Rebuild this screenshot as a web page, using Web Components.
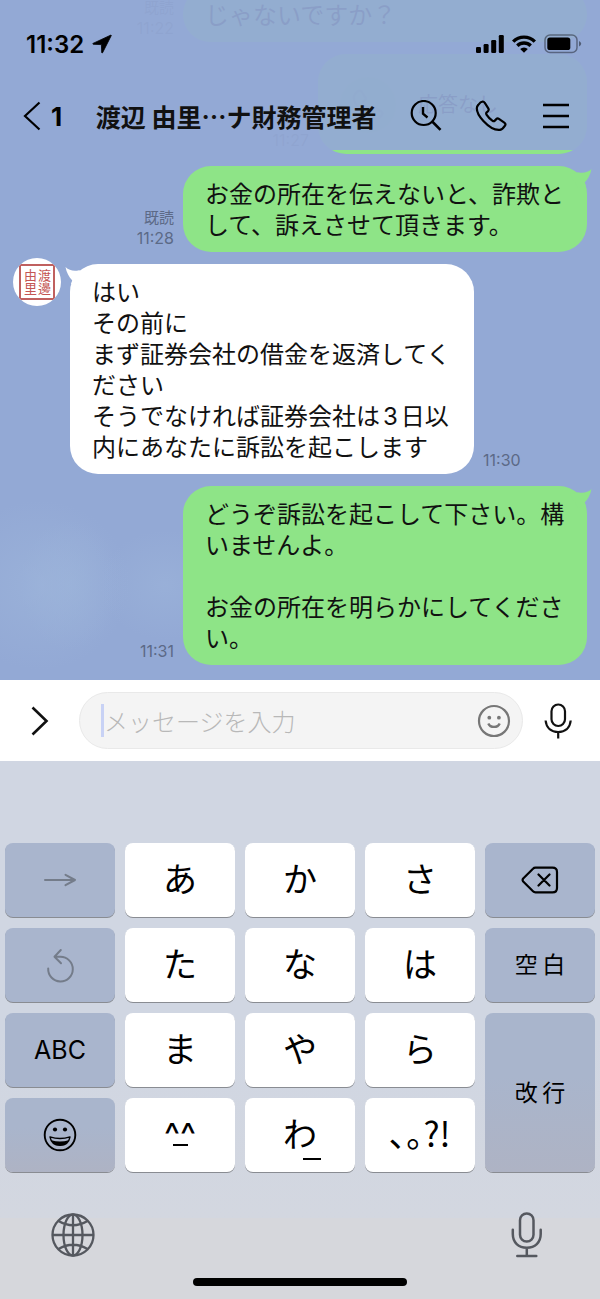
<!DOCTYPE html>
<html lang="ja">
<head>
<meta charset="utf-8">
<meta name="viewport" content="width=device-width, initial-scale=1">
<title>トーク</title>
<style>
    body {
        margin: 0;
        height: 100vh;
        display: flex;
        flex-direction: column;
        font-family: Inter, "Noto Sans CJK JP", sans-serif;
        color: #111;
        background: #93a9d5;
    }
</style>
</head>
<body>
    <chat-header unread="1">渡辺 由里…ナ財務管理者</chat-header>

    <chat-room>
        <chat-message side="out" time="11:22" read wide>じゃないですか？</chat-message>
        <chat-message side="out" time="11:27" call>応答なし</chat-message>
        <chat-message side="out" time="11:28" read tail>お金の所在を伝えないと、詐欺として、訴えさせて頂きます。</chat-message>
        <chat-message side="in" time="11:30" tail>はい<br>その前に<br>まず証券会社の借金を返済してください<br>そうでなければ証券会社は3日以内にあなたに訴訟を起こします<user-seal slot="avatar">渡邊由里</user-seal></chat-message>
        <chat-message side="out" time="11:31" tail>どうぞ訴訟を起こして下さい。構いませんよ。<br><br>お金の所在を明らかにしてください。</chat-message>
    </chat-room>

    <message-composer placeholder="メッセージを入力"></message-composer>

    <kana-keyboard>
        <kana-key tone="dim" label="次へ"><app-icon name="arrow"></app-icon></kana-key>
        <kana-key>あ</kana-key>
        <kana-key>か</kana-key>
        <kana-key>さ</kana-key>
        <kana-key tone="dark" label="削除"><app-icon name="delete"></app-icon></kana-key>

        <kana-key tone="dim" label="戻す"><app-icon name="undo"></app-icon></kana-key>
        <kana-key>た</kana-key>
        <kana-key>な</kana-key>
        <kana-key>は</kana-key>
        <kana-key tone="dark">空&thinsp;白</kana-key>

        <kana-key tone="dark" latin>ABC</kana-key>
        <kana-key>ま</kana-key>
        <kana-key>や</kana-key>
        <kana-key>ら</kana-key>
        <kana-key tone="dark" tall>改&thinsp;行</kana-key>

        <kana-key tone="dark" shade label="絵文字"><app-icon name="grin"></app-icon></kana-key>
        <kana-key mark="face">^^</kana-key>
        <kana-key mark="wa">わ</kana-key>
        <kana-key>､｡?!</kana-key>
    </kana-keyboard>

<script>
// every icon is [width, height, svg content], drawn with currentColor
const ICONS = {
    location: [20, 20, '<path d="M19 1 L1 9.400 Q.4 10 1.200 10.300 L9.400 10.600 L9.700 18.600 Q10 19.500 10.600 18.700 L19.300 1.500 Z" fill="currentColor" stroke="currentColor" stroke-width=".8" stroke-linejoin="round"/>'],
    signal: [28, 18, '<g fill="currentColor"><rect x="0" y="12" width="5" height="6" rx="1.300"/><rect x="7.600" y="9" width="5" height="9" rx="1.300"/><rect x="15.200" y="5" width="5" height="13" rx="1.300"/><rect x="22.800" y="0" width="5" height="18" rx="1.300"/></g>'],
    wifi: [24, 18, '<g fill="none" stroke="currentColor" stroke-width="3.400"><path d="M1.200 6.600 A15.300 15.300 0 0 1 22.800 6.600"/><path d="M5.300 10.700 A9.500 9.500 0 0 1 18.700 10.700"/></g><path d="M8.200 14 A5.400 5.400 0 0 1 15.800 14 L12 17.800 Z" fill="currentColor"/>'],
    battery: [38, 20, '<rect x="1" y="1" width="32" height="17.500" rx="5" fill="none" stroke="currentColor" stroke-opacity=".4" stroke-width="1.500"/><rect x="3.300" y="3.500" width="23" height="12.500" rx="2.600" fill="currentColor"/><path d="M35 7 Q37.200 8 37.200 9.800 T35 12.600 Z" fill="currentColor" opacity=".45"/>'],
    back: [18, 30, '<path d="M16.500 1.500 L2 15 L16.500 28.500" fill="none" stroke="currentColor" stroke-width="2.200"/>'],
    search: [32, 32, '<g fill="none" stroke="currentColor" stroke-width="2.200"><circle cx="13.700" cy="13" r="12"/><path d="M22.200 21.500 L30.500 29.800" stroke-width="2.600"/><path d="M13 7 V13.800 L17.500 17.500" stroke-width="2.400"/></g>'],
    phone: [32, 32, '<path d="M3.300 4.800 C4.500 3.200 6.300 1.700 7.700 1.500 C8.700 1.400 9.200 2 9.800 2.900 L13.300 8.300 C14 9.400 13.900 10 13.100 10.900 L11.600 12.500 C11 13.200 11 13.800 11.500 14.600 C13 17 15.200 19.200 17.600 20.800 C18.500 21.400 19.100 21.300 19.800 20.600 L21.300 19.100 C22.100 18.300 22.900 18.200 23.900 18.900 L29.300 22.600 C30.600 23.500 30.800 24.400 30 25.600 C28.800 27.500 27.300 29.400 25 29.800 C19.500 30.500 12.500 25.300 8.400 20.900 C4.600 16.900 1.800 11.700 1.800 8.200 C1.800 6.900 2.400 5.900 3.300 4.800 Z" fill="none" stroke="currentColor" stroke-width="2.200" stroke-linejoin="round"/>'],
    menu: [32, 32, '<path d="M3 5 H29 M3 16 H29 M3 27 H29" stroke="currentColor" stroke-width="2.400"/>'],
    expand: [18, 30, '<path d="M1.500 1.500 L15.500 15 L1.500 28.500" fill="none" stroke="currentColor" stroke-width="2.600"/>'],
    smile: [34, 34, '<circle cx="17" cy="17" r="15" fill="none" stroke="currentColor" stroke-width="2.200"/><circle cx="12.300" cy="13.700" r="1.900" fill="currentColor"/><circle cx="21.900" cy="13.700" r="1.900" fill="currentColor"/><path d="M11.300 19.400 C13.300 24 20.700 24 22.700 19.400" fill="none" stroke="currentColor" stroke-width="2.400"/>'],
    mic: [28, 36, '<g fill="none" stroke="currentColor" stroke-width="2.200"><rect x="7.500" y="1.500" width="13.500" height="21.500" rx="6.700"/><path d="M1.600 17.500 C2.300 25.200 7.500 29 14.200 29 C21 29 26 25.200 26.700 17.500 M14.200 29 V35.500"/></g>'],
    arrow: [34, 16, '<path d="M2 8 H32 M22.500 2.800 L32 8 L22.500 13.200" fill="none" stroke="currentColor" stroke-width="2" stroke-linecap="round" stroke-linejoin="round"/>'],
    undo: [34, 36, '<path d="M5.200 21.500 A12.300 12.300 0 1 0 17.300 9.800 L11.800 9.800 M17.800 3 L11.500 9.700 L18 16.300" fill="none" stroke="currentColor" stroke-width="2" stroke-linecap="round" stroke-linejoin="round"/>'],
    delete: [38, 28, '<path d="M14.500 1.600 H31.500 Q36 1.600 36 6 V22 Q36 26.400 31.500 26.400 H14.500 Q13 26.400 12 25.300 L2.200 15.500 Q1 14 2.200 12.500 L12 2.700 Q13 1.600 14.500 1.600 Z M17.500 8.500 L28.500 19.500 M28.500 8.500 L17.500 19.500" fill="none" stroke="currentColor" stroke-width="2.200" stroke-linecap="round" stroke-linejoin="round"/>'],
    grin: [34, 34, '<circle cx="17" cy="17" r="15.300" fill="none" stroke="currentColor" stroke-width="1.900"/><circle cx="12" cy="11.500" r="2.100" fill="currentColor"/><circle cx="22" cy="11.500" r="2.100" fill="currentColor"/><path d="M7 18.900 Q17 22 27 18.900 Q25.500 27.300 17 27.300 Q8.500 27.300 7 18.900 Z" fill="none" stroke="currentColor" stroke-width="1.400" stroke-linejoin="round"/><path d="M8.300 22.200 Q17 25 25.700 22.200 Q23.500 27.600 17 27.600 Q10.500 27.600 8.300 22.200 Z" fill="currentColor"/>'],
    globe: [44, 44, '<g fill="none" stroke="currentColor" stroke-width="2.300"><circle cx="22" cy="22" r="20.500"/><ellipse cx="22" cy="22" rx="9.500" ry="20.500"/><path d="M22 1.500 V42.500 M1.500 22 H42.500 M7.500 8 Q22 16.500 36.500 8 M7.500 36 Q22 27.500 36.500 36"/></g>'],
    dictate: [32, 46, '<g fill="none" stroke="currentColor" stroke-width="2.500" stroke-linecap="round"><rect x="9" y="1.500" width="13.500" height="28" rx="6.700"/><path d="M1.800 17.800 V22 C1.800 30.500 7.500 35.700 15.800 35.700 C24 35.700 29.700 30.500 29.700 22 V17.800 M15.800 35.700 V44 M6.300 44 H25.300"/></g>']
};

class AppIcon extends HTMLElement {
    constructor() {
        super();
        this.attachShadow({ mode: 'open' });
    }

    connectedCallback() {
        const [w, h, body] = ICONS[this.getAttribute('name')];
        this.shadowRoot.innerHTML = `
            <style>
                :host { display: inline-block; flex: none; line-height: 0; }
            </style>
            <svg width="${w}" height="${h}" viewBox="0 0 ${w} ${h}" aria-hidden="true">${body}</svg>
        `;
    }
}
customElements.define('app-icon', AppIcon);


const headerTemplate = document.createElement('template');
headerTemplate.innerHTML = `
    <style>
        :host {
            display: block;
            position: absolute;
            inset: 0 0 auto 0;
            z-index: 1;
            color: #000;
            background: rgba(147, 169, 213, .93);
        }
        .status, nav, .status div {
            display: flex;
            align-items: center;
        }
        .status {
            height: 76px;
            padding: 6px 18px 0 26px;
            justify-content: space-between;
            font-size: 24px;
            font-weight: 600;
        }
        .status div { gap: 8px; }
        nav {
            height: 68px;
            padding: 0 28px 0 23px;
        }
        a {
            display: flex;
            align-items: center;
            gap: 10px;
            color: inherit;
            text-decoration: none;
            font-size: 26px;
            font-weight: 700;
        }
        h1 {
            flex: 1;
            margin: 0;
            text-align: center;
            white-space: nowrap;
            font: 700 25px/28px "Noto Sans CJK JP", sans-serif;
            color: #111;
        }
        .tools { display: flex; gap: 33px; }
        button {
            padding: 0;
            border: 0;
            background: none;
            color: inherit;
            line-height: 0;
        }
    </style>
    <div class="status">
        <div><span>11:32</span><app-icon name="location"></app-icon></div>
        <div>
            <app-icon name="signal"></app-icon>
            <app-icon name="wifi"></app-icon>
            <app-icon name="battery"></app-icon>
        </div>
    </div>
    <nav>
        <a href="#" aria-label="戻る"><app-icon name="back"></app-icon><span id="unread"></span></a>
        <h1><slot></slot></h1>
        <div class="tools">
            <button type="button" aria-label="検索"><app-icon name="search"></app-icon></button>
            <button type="button" aria-label="通話"><app-icon name="phone"></app-icon></button>
            <button type="button" aria-label="メニュー"><app-icon name="menu"></app-icon></button>
        </div>
    </nav>
`;

class ChatHeader extends HTMLElement {
    constructor() {
        super();
        const root = this.attachShadow({ mode: 'open' });
        root.appendChild(headerTemplate.content.cloneNode(true));
    }

    connectedCallback() {
        this.shadowRoot.querySelector('#unread').textContent = this.getAttribute('unread');
    }
}
customElements.define('chat-header', ChatHeader);


const roomTemplate = document.createElement('template');
roomTemplate.innerHTML = `
    <style>
        :host {
            flex: 1;
            min-height: 0;
            overflow: hidden;
            display: flex;
            flex-direction: column;
            justify-content: flex-end;
            gap: 12px;
            padding: 0 13px 15px;
            /* pale clouds */
            background:
                radial-gradient(closest-side, rgba(158, 182, 219, .6), rgba(158, 182, 219, 0)) -50px calc(100% - 10px) / 180px 170px no-repeat,
                radial-gradient(closest-side, rgba(158, 182, 219, .5), rgba(158, 182, 219, 0)) 20px calc(100% - 30px) / 100px 130px no-repeat,
                radial-gradient(closest-side, rgba(158, 182, 219, .5), rgba(158, 182, 219, 0)) 100px calc(100% - 40px) / 130px 110px no-repeat,
                #93a9d5;
        }
    </style>
    <slot></slot>
`;

class ChatRoom extends HTMLElement {
    constructor() {
        super();
        const root = this.attachShadow({ mode: 'open' });
        root.appendChild(roomTemplate.content.cloneNode(true));
    }
}
customElements.define('chat-room', ChatRoom);


const messageTemplate = document.createElement('template');
messageTemplate.innerHTML = `
    <style>
        :host {
            display: flex;
            flex: none;
            align-items: flex-end;
            gap: 9px;
        }
        :host([side="out"]) { flex-direction: row-reverse; }
        .bubble {
            position: relative;
            box-sizing: border-box;
            max-width: 404px;
            padding: 13px 22px 11px;
            border-radius: 28px;
            background: #fff;
            font-size: 24px;
            line-height: 31px;
            text-autospace: normal;
        }
        :host([side="out"]) .bubble { background: #8ee487; }
        :host([wide]) .bubble { width: 404px; }
        .tail { display: none; }
        :host([tail]) .tail {
            display: block;
            position: absolute;
            top: 0;
            left: -5px;
            color: #fff;
        }
        :host([side="out"][tail]) .tail {
            left: auto;
            right: -5px;
            color: #8ee487;
            transform: scaleX(-1);
        }
        .meta {
            padding-bottom: 4px;
            font-size: 16px;
            line-height: 20px;
            color: #5c6a87;
            text-align: right;
        }
        .read {
            display: none;
            font-size: 15px;
        }
        :host([read]) .read { display: block; }
        /* avatar stands a little higher than the bubble */
        slot[name="avatar"] {
            display: none;
            align-self: flex-start;
            margin-top: -6px;
        }
        :host([side="in"]) slot[name="avatar"] { display: block; }
        .ring { display: none; }
        :host([call]) .ring {
            display: grid;
            place-items: center;
            width: 56px;
            height: 56px;
            border-radius: 50%;
            background: #86d985;
            color: #6fbe78;
        }
        :host([call]) .bubble {
            display: flex;
            align-items: center;
            gap: 22px;
            width: 269px;
            height: 100px;
            font-size: 20px;
        }
    </style>
    <slot name="avatar"></slot>
    <div class="bubble">
        <svg class="tail" width="24" height="24" viewBox="0 0 24 24" aria-hidden="true">
            <path d="M.5 3 C4 6.500 9 7.600 14 6.300 L22 8 L14 22 L6 20 L7.300 16.500 C4 13 1.500 8.500 .5 3 Z" fill="currentColor"/>
        </svg>
        <span class="ring"><app-icon name="phone"></app-icon></span>
        <span><slot></slot></span>
    </div>
    <div class="meta">
        <span class="read">既読</span>
        <time></time>
    </div>
`;

class ChatMessage extends HTMLElement {
    constructor() {
        super();
        const root = this.attachShadow({ mode: 'open' });
        root.appendChild(messageTemplate.content.cloneNode(true));
    }

    connectedCallback() {
        this.shadowRoot.querySelector('time').textContent = this.getAttribute('time');
    }
}
customElements.define('chat-message', ChatMessage);


// round avatar with a red name stamp, read from right to left
const sealTemplate = document.createElement('template');
sealTemplate.innerHTML = `
    <style>
        :host {
            display: grid;
            place-items: center;
            width: 48px;
            height: 48px;
            overflow: hidden;
            border-radius: 50%;
            background: #fff;
        }
        span {
            box-sizing: border-box;
            display: grid;
            place-content: center;
            width: 36px;
            height: 36px;
            border: 2px solid #c0605f;
            color: #c45654;
            font: 400 13px/14px "Noto Sans CJK JP", sans-serif;
            writing-mode: vertical-rl;
        }
        slot { display: block; height: 27px; }
    </style>
    <span><slot></slot></span>
`;

class UserSeal extends HTMLElement {
    constructor() {
        super();
        const root = this.attachShadow({ mode: 'open' });
        root.appendChild(sealTemplate.content.cloneNode(true));
    }
}
customElements.define('user-seal', UserSeal);


const composerTemplate = document.createElement('template');
composerTemplate.innerHTML = `
    <style>
        :host {
            display: flex;
            align-items: center;
            padding: 12px 7px 12px 0;
            background: #fff;
        }
        button {
            padding: 0;
            border: 0;
            background: none;
            color: #111;
            line-height: 0;
        }
        .expand { width: 79px; }
        .voice { width: 70px; }
        .field {
            flex: 1;
            min-width: 0;
            box-sizing: border-box;
            height: 57px;
            display: flex;
            align-items: center;
            padding: 0 11px 0 21px;
            border: 1px solid #e9e9e9;
            border-radius: 29px;
            background: #f4f4f4;
        }
        .field button { color: #777; }
        .caret {
            width: 3px;
            height: 33px;
            background: #c8d2f5;
        }
        input {
            flex: 1;
            min-width: 0;
            padding: 0;
            border: 0;
            outline: 0;
            background: none;
            font: 300 24px/36px "Noto Sans CJK JP", sans-serif;
        }
        input::placeholder { color: #b8b8b8; }
    </style>
    <button class="expand" type="button" aria-label="開く"><app-icon name="expand"></app-icon></button>
    <div class="field">
        <span class="caret"></span>
        <input type="text">
        <button type="button" aria-label="スタンプ"><app-icon name="smile"></app-icon></button>
    </div>
    <button class="voice" type="button" aria-label="音声"><app-icon name="mic"></app-icon></button>
`;

class MessageComposer extends HTMLElement {
    constructor() {
        super();
        const root = this.attachShadow({ mode: 'open' });
        root.appendChild(composerTemplate.content.cloneNode(true));
    }

    connectedCallback() {
        const input = this.shadowRoot.querySelector('input');
        input.placeholder = this.getAttribute('placeholder');
        input.setAttribute('aria-label', this.getAttribute('placeholder'));
    }
}
customElements.define('message-composer', MessageComposer);


const keyTemplate = document.createElement('template');
keyTemplate.innerHTML = `
    <style>
        :host { display: grid; }
        :host([tall]) { grid-row: span 2; }
        button {
            position: relative;
            display: grid;
            place-items: center;
            padding: 0 0 4px;
            border: 0;
            border-radius: 8px;
            background: #fff;
            box-shadow: 0 1px 0 #898c92;
            color: #000;
            font: 400 34px/40px "Noto Sans CJK JP", sans-serif;
        }
        :host([tone]) button {
            background: #a9b5cd;
            font-size: 23px;
        }
        :host([label]) button, :host([latin]) button { padding: 0; }
        :host([tone="dim"]) button { color: #747c8a; }
        :host([tall]) button, :host([shade]) button {
            background: linear-gradient(#a9b5cc 40%, #aeb3c4);
        }
        :host([latin]) button {
            font-family: Inter, sans-serif;
            font-size: 25px;
        }
        :host([mark="face"]) button {
            padding: 0;
            font-family: Inter, sans-serif;
        }
        /* low bar drawn next to the kana */
        :host([mark]) button::after {
            content: "";
            position: absolute;
            height: 2px;
            width: 15px;
            top: 46px;
            background: #000;
        }
        :host([mark="wa"]) button::after {
            width: 18px;
            top: 60px;
            left: 58px;
        }
    </style>
    <button type="button"><slot></slot></button>
`;

class KanaKey extends HTMLElement {
    constructor() {
        super();
        const root = this.attachShadow({ mode: 'open' });
        root.appendChild(keyTemplate.content.cloneNode(true));
    }

    connectedCallback() {
        const label = this.getAttribute('label');
        if (label !== null) {
            this.shadowRoot.querySelector('button').setAttribute('aria-label', label);
        }
    }
}
customElements.define('kana-key', KanaKey);


const keyboardTemplate = document.createElement('template');
keyboardTemplate.innerHTML = `
    <style>
        :host {
            display: block;
            padding-top: 82px;
            background: linear-gradient(#d0d6e2 0, #d0d6e2 50%, #d3d7e0 85%, #d6d7dc 85%);
        }
        .keys {
            display: grid;
            grid-template-columns: repeat(5, 1fr);
            grid-auto-rows: 74px;
            gap: 11px 10px;
            padding: 0 5px;
        }
        .dock {
            display: flex;
            justify-content: space-between;
            align-items: center;
            height: 44px;
            padding: 41px 57px 21px 51px;
            color: #55585f;
        }
        .dock button {
            padding: 0;
            border: 0;
            background: none;
            color: inherit;
            line-height: 0;
        }
        .home {
            width: 214px;
            height: 8px;
            margin: 0 auto;
            border-radius: 4px;
            background: #000;
        }
        .foot { padding-bottom: 13px; }
    </style>
    <div class="keys"><slot></slot></div>
    <div class="dock">
        <button type="button" aria-label="キーボード切替"><app-icon name="globe"></app-icon></button>
        <button type="button" aria-label="音声入力"><app-icon name="dictate"></app-icon></button>
    </div>
    <div class="foot"><div class="home"></div></div>
`;

class KanaKeyboard extends HTMLElement {
    constructor() {
        super();
        const root = this.attachShadow({ mode: 'open' });
        root.appendChild(keyboardTemplate.content.cloneNode(true));
    }
}
customElements.define('kana-keyboard', KanaKeyboard);
</script>
</body>
</html>
